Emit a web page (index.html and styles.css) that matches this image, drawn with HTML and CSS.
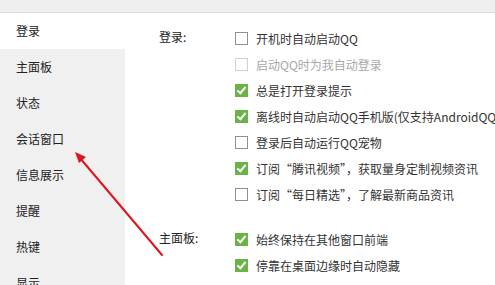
FILE: index.html
```html
<!DOCTYPE html>
<html lang="zh">
<head>
<meta charset="utf-8">
<link rel="stylesheet" href="styles.css">
</head>
<body>
<div class="topbar"></div>
<div class="main">
  <nav class="sidebar">
    <div class="nav-item active">登录</div>
    <div class="nav-item">主面板</div>
    <div class="nav-item">状态</div>
    <div class="nav-item">会话窗口</div>
    <div class="nav-item">信息展示</div>
    <div class="nav-item">提醒</div>
    <div class="nav-item">热键</div>
    <div class="nav-item">显示</div>
  </nav>
  <div class="content">
    <section class="section">
      <div class="label">登录:</div>
      <div class="options">
        <div class="opt"><span class="box"></span>开机时自动启动QQ</div>
        <div class="opt disabled"><span class="box"></span>启动QQ时为我自动登录</div>
        <div class="opt"><span class="box checked"></span>总是打开登录提示</div>
        <div class="opt"><span class="box checked"></span>离线时自动启动QQ手机版(仅支持AndroidQQ)</div>
        <div class="opt"><span class="box"></span>登录后自动运行QQ宠物</div>
        <div class="opt"><span class="box checked"></span>订阅“腾讯视频”，获取量身定制视频资讯</div>
        <div class="opt"><span class="box"></span>订阅“每日精选”，了解最新商品资讯</div>
      </div>
    </section>
    <section class="section second">
      <div class="label">主面板:</div>
      <div class="options">
        <div class="opt"><span class="box checked"></span>始终保持在其他窗口前端</div>
        <div class="opt"><span class="box checked"></span>停靠在桌面边缘时自动隐藏</div>
        <div class="opt"><span class="box checked"></span>在任务栏通知区域显示QQ图标</div>
      </div>
    </section>
  </div>
</div>
<svg class="arrow" width="495" height="285" viewBox="0 0 495 285">
  <line x1="162" y1="255" x2="80" y2="158" stroke="#e0141c" stroke-width="2" stroke-linecap="round"/>
  <polygon points="75,152 86,157 79,163" fill="#e0141c"/>
</svg>
</body>
</html>
```
FILE: styles.css
```css
html, body {
  margin: 0;
  padding: 0;
}
body {
  width: 495px;
  height: 285px;
  overflow: hidden;
  background: #ffffff;
  font-family: "Noto Sans CJK SC", "Microsoft YaHei", sans-serif;
  font-size: 12px;
  color: #333333;
  position: relative;
}
.topbar {
  height: 12px;
  background: #efefef;
  border-bottom: 1px solid #dadada;
}
.main {
  display: flex;
}
.sidebar {
  width: 125px;
  flex: 0 0 125px;
  background: #f0f0f0;
  height: 300px;
}
.nav-item {
  height: 36px;
  line-height: 36px;
  padding-left: 16px;
  color: #222222;
}
.nav-item.active {
  background: #ffffff;
}
.content {
  flex: 1;
  padding-left: 34px;
  padding-top: 12px;
  white-space: nowrap;
}
.section {
  display: flex;
}
.section.second {
  margin-top: 19px;
}
.label {
  width: 76px;
  flex: 0 0 76px;
  height: 26px;
  line-height: 24px;
  color: #222222;
}
.opt {
  height: 26px;
  display: flex;
  align-items: center;
}
.box {
  width: 11px;
  height: 11px;
  border: 1px solid #8f8f8f;
  background: #ffffff;
  margin-right: 8px;
  flex: 0 0 auto;
  position: relative;
}
.disabled {
  color: #a8a8a8;
}
.disabled .box {
  border-color: #d0d0d0;
}
.box.checked {
  border-color: #6ab347;
  background: #6ab347;
}
.box.checked::after {
  content: "";
  position: absolute;
  left: 3px;
  top: 0px;
  width: 3px;
  height: 7px;
  border-right: 2px solid #ffffff;
  border-bottom: 2px solid #ffffff;
  transform: rotate(40deg);
}
.arrow {
  position: absolute;
  left: 0;
  top: 0;
  pointer-events: none;
}
```
